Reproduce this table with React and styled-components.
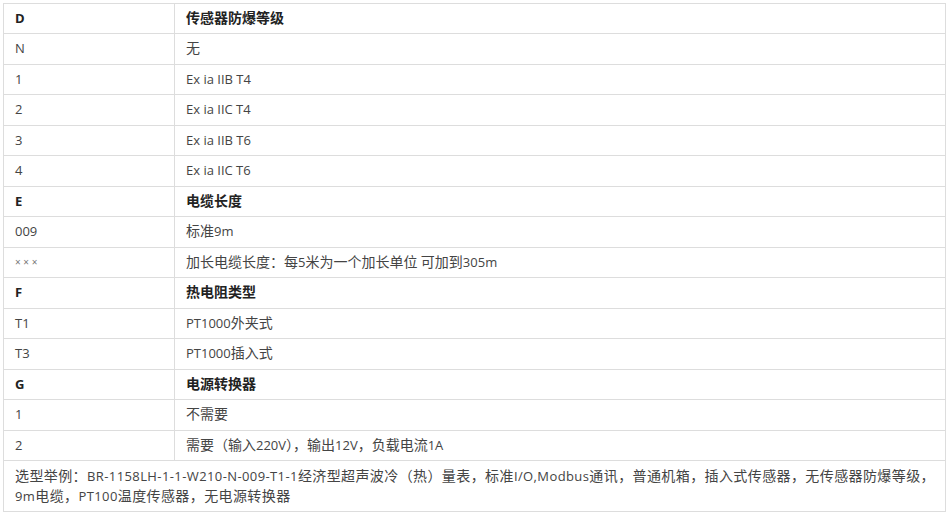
import React from "react";
import styled, { createGlobalStyle } from "styled-components";

const GlobalStyle = createGlobalStyle`
  html, body {
    margin: 0;
    padding: 0;
    background: #fff;
  }
  body {
    font-family: "Open Sans", "Noto Sans CJK SC", sans-serif;
    color: #333;
  }
`;

const sections = [
  {
    code: "D",
    title: "传感器防爆等级",
    items: [
      ["N", "无"],
      ["1", "Ex ia IIB T4"],
      ["2", "Ex ia IIC T4"],
      ["3", "Ex ia IIB T6"],
      ["4", "Ex ia IIC T6"],
    ],
  },
  {
    code: "E",
    title: "电缆长度",
    items: [
      ["009", "标准9m"],
      ["× × ×", "加长电缆长度：每5米为一个加长单位 可加到305m"],
    ],
  },
  {
    code: "F",
    title: "热电阻类型",
    items: [
      ["T1", "PT1000外夹式"],
      ["T3", "PT1000插入式"],
    ],
  },
  {
    code: "G",
    title: "电源转换器",
    items: [
      ["1", "不需要"],
      ["2", "需要（输入220V），输出12V，负载电流1A"],
    ],
  },
];

const note =
  "选型举例：BR-1158LH-1-1-W210-N-009-T1-1经济型超声波冷（热）量表，标准I/O,Modbus通讯，普通机箱，插入式传感器，无传感器防爆等级，9m电缆，PT100温度传感器，无电源转换器";

// CJK runs get a slightly larger size, like the Chinese face on the original page
const hanRun = /([\u3000-\u303f\u4e00-\u9fff\uff00-\uffef]+)/;

function Mixed({ text }) {
  return text
    .split(hanRun)
    .filter(Boolean)
    .map((part, i) =>
      hanRun.test(part) ? <Han key={i}>{part}</Han> : <span key={i}>{part}</span>
    );
}

export default function App() {
  return (
    <>
      <GlobalStyle />
      <Wrap>
        <Table>
          <colgroup>
            <col style={{ width: 171 }} />
            <col />
          </colgroup>
          <tbody>
            {sections.map((s) => (
              <React.Fragment key={s.code}>
                <tr>
                  <Cell bold>{s.code}</Cell>
                  <Cell bold>
                    <Mixed text={s.title} />
                  </Cell>
                </tr>
                {s.items.map(([k, v]) => (
                  <tr key={s.code + k}>
                    <Cell muted={k.includes("×")}>{k}</Cell>
                    <Cell>
                      <Mixed text={v} />
                    </Cell>
                  </tr>
                ))}
              </React.Fragment>
            ))}
            <tr>
              <NoteCell colSpan={2}>
                <Mixed text={note} />
              </NoteCell>
            </tr>
          </tbody>
        </Table>
      </Wrap>
    </>
  );
}

const Wrap = styled.div`
  padding: 3px 2px 0 3px;
`;

const Table = styled.table`
  width: 943px;
  border-collapse: collapse;
  table-layout: fixed;
  font-size: 13px;
`;

const Cell = styled.td`
  border: 1px solid #ddd;
  padding: 5px 10px 5px 11px;
  height: 19.47px;
  line-height: 19.47px;
  font-weight: ${(p) => (p.bold ? 700 : 400)};
  font-size: ${(p) => (p.muted ? "10px" : "13px")};
  color: ${(p) => (p.bold ? "#222" : p.muted ? "#777" : "#444")};
  white-space: nowrap;
`;

const NoteCell = styled.td`
  border: 1px solid #ddd;
  padding: 5px 10px 5px 11px;
  line-height: 20px;
  letter-spacing: 0.4px;
  color: #444;
`;

const Han = styled.span`
  font-family: "Noto Sans CJK SC", sans-serif;
  font-size: 14px;
  line-height: 1;
`;
